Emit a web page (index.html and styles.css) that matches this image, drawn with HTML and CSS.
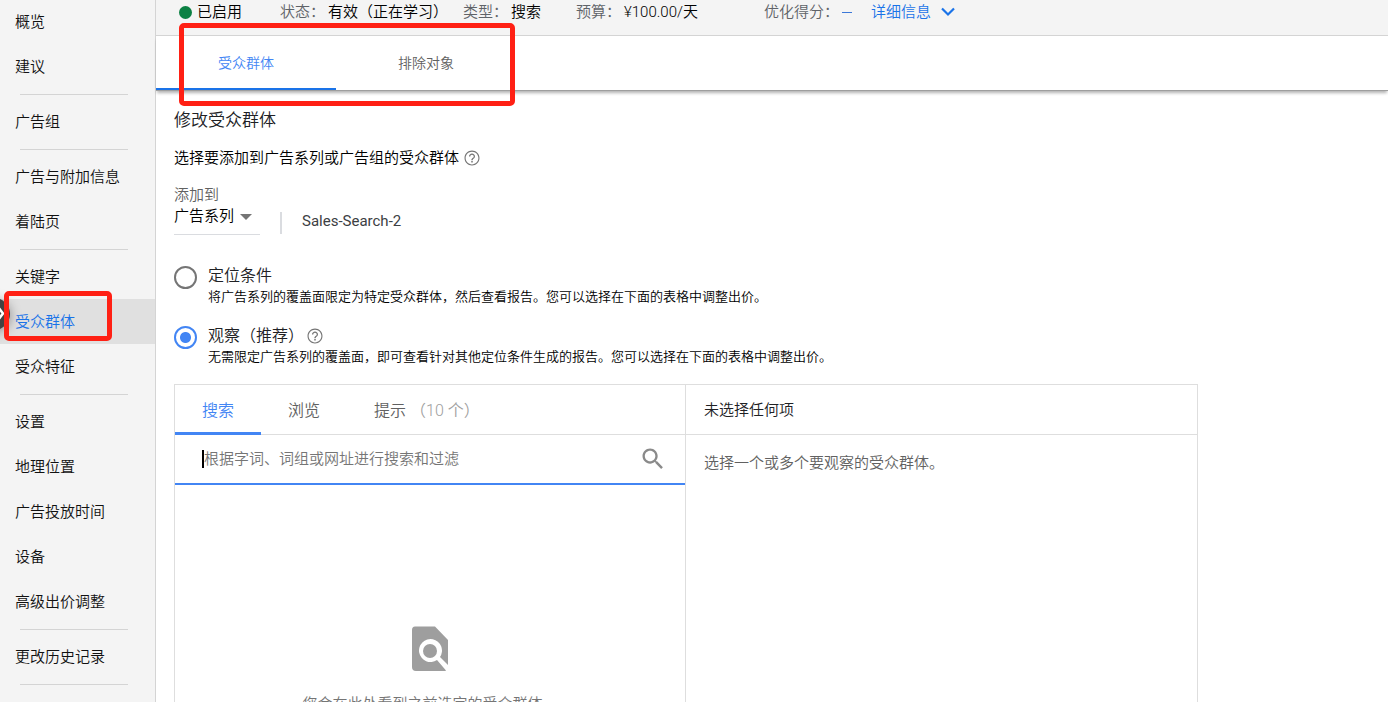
FILE: index.html
```html
<!DOCTYPE html>
<html lang="zh-CN">
<head>
<meta charset="utf-8">
<title>受众群体</title>
<link rel="stylesheet" href="styles.css">
</head>
<body>
<div class="app">
  <nav class="sidebar">
    <a href="#" class="nav-item">概览</a>
    <a href="#" class="nav-item">建议</a>
    <hr class="nav-line">
    <a href="#" class="nav-item">广告组</a>
    <hr class="nav-line">
    <a href="#" class="nav-item">广告与附加信息</a>
    <a href="#" class="nav-item">着陆页</a>
    <hr class="nav-line">
    <a href="#" class="nav-item">关键字</a>
    <a href="#" class="nav-item nav-item-active">受众群体</a>
    <a href="#" class="nav-item">受众特征</a>
    <hr class="nav-line">
    <a href="#" class="nav-item">设置</a>
    <a href="#" class="nav-item">地理位置</a>
    <a href="#" class="nav-item">广告投放时间</a>
    <a href="#" class="nav-item">设备</a>
    <a href="#" class="nav-item">高级出价调整</a>
    <hr class="nav-line">
    <a href="#" class="nav-item">更改历史记录</a>
    <hr class="nav-line">
    <button class="expander" type="button" aria-label="展开">
      <svg width="32" height="32" viewBox="0 0 32 32"><path d="M20 9l5 6.500-5 6.500" fill="none" stroke="#fff" stroke-width="2.500"/></svg>
    </button>
    <div class="mark mark-nav"></div>
  </nav>

  <div class="content">
    <header class="status-bar">
      <div class="status status-enabled"><span class="dot"></span><span>已启用</span></div>
      <div class="status status-state"><span class="key">状态：</span><span>有效（正在学习）</span></div>
      <div class="status status-type"><span class="key">类型：</span><span>搜索</span></div>
      <div class="status status-budget"><span class="key">预算：</span><span>¥100.00/天</span></div>
      <div class="status status-score"><span class="key">优化得分：</span><span class="dash"></span></div>
      <a href="#" class="details">详细信息
        <svg width="14" height="10" viewBox="0 0 14 10"><path d="M1 1.500l6 6 6-6" fill="none" stroke="#1a73e8" stroke-width="2.200"/></svg>
      </a>
    </header>

    <div class="tabs" role="tablist">
      <button class="tab tab-active" type="button" role="tab">受众群体</button>
      <button class="tab" type="button" role="tab">排除对象</button>
      <div class="mark mark-tabs"></div>
    </div>

    <main class="main">
      <h1 class="title">修改受众群体</h1>
      <p class="subtitle">选择要添加到广告系列或广告组的受众群体
        <svg class="help" viewBox="0 0 24 24"><path d="M11 18h2v-2h-2v2zm1-16C6.480 2 2 6.480 2 12s4.480 10 10 10 10-4.480 10-10S17.520 2 12 2zm0 18.500c-4.700 0-8.500-3.800-8.500-8.500S7.300 3.500 12 3.500s8.500 3.800 8.500 8.500-3.800 8.500-8.500 8.500zM12 6c-2.210 0-4 1.790-4 4h1.700c0-1.300 1.050-2.300 2.300-2.300s2.300 1 2.300 2.300c0 2-3.200 1.900-3.200 5h1.800c0-2.250 3.100-2.500 3.100-5 0-2.210-1.790-4-4-4z"/></svg>
      </p>

      <label class="field-label" for="level">添加到</label>
      <div class="target">
        <div class="select-box">
          <select id="level" class="select"><option>广告系列</option></select>
          <svg class="caret" width="12" height="6" viewBox="0 0 12 6"><path d="M0 0h12L6 6z" fill="#757575"/></svg>
        </div>
        <span class="campaign">Sales-Search-2</span>
      </div>

      <div class="option">
        <input class="radio" type="radio" name="mode" id="targeting">
        <div>
          <label class="option-name" for="targeting">定位条件</label>
          <p class="option-text">将广告系列的覆盖面限定为特定受众群体，然后查看报告。您可以选择在下面的表格中调整出价。</p>
        </div>
      </div>
      <div class="option">
        <input class="radio" type="radio" name="mode" id="observe" checked>
        <div>
          <label class="option-name" for="observe">观察（推荐）
            <svg class="help" viewBox="0 0 24 24"><path d="M11 18h2v-2h-2v2zm1-16C6.480 2 2 6.480 2 12s4.480 10 10 10 10-4.480 10-10S17.520 2 12 2zm0 18.500c-4.700 0-8.500-3.800-8.500-8.500S7.300 3.500 12 3.500s8.500 3.800 8.500 8.500-3.800 8.500-8.500 8.500zM12 6c-2.210 0-4 1.790-4 4h1.700c0-1.300 1.050-2.300 2.300-2.300s2.300 1 2.300 2.300c0 2-3.200 1.900-3.200 5h1.800c0-2.250 3.100-2.500 3.100-5 0-2.210-1.790-4-4-4z"/></svg>
          </label>
          <p class="option-text">无需限定广告系列的覆盖面，即可查看针对其他定位条件生成的报告。您可以选择在下面的表格中调整出价。</p>
        </div>
      </div>

      <section class="picker">
        <div class="pane pane-browse">
          <div class="pane-head" role="tablist">
            <button class="pane-tab pane-tab-active" type="button" role="tab">搜索</button>
            <button class="pane-tab" type="button" role="tab">浏览</button>
            <button class="pane-tab" type="button" role="tab">提示<span class="count">（10 个）</span></button>
          </div>
          <div class="search">
            <span class="cursor"></span>
            <input class="search-input" type="text" aria-label="搜索" placeholder="根据字词、词组或网址进行搜索和过滤">
            <svg width="28" height="28" viewBox="0 0 24 24"><path fill="#8a8a8a" d="M15.500 14h-.79l-.28-.27C15.410 12.590 16 11.110 16 9.500 16 5.910 13.090 3 9.500 3S3 5.910 3 9.500 5.910 16 9.500 16c1.610 0 3.090-.59 4.230-1.570l.27.28v.79l5 4.990L20.490 19l-4.990-5zm-6 0C7.010 14 5 11.990 5 9.500S7.010 5 9.500 5 14 7.010 14 9.500 11.990 14 9.500 14z"/></svg>
          </div>
          <div class="empty">
            <svg width="38" height="46" viewBox="0 0 38 46"><path d="M4 .5H24L37 14V39L29 31A11.500 11.500 0 1 0 26 34L35 44.500Q34.500 45 33 45H5Q1 45 1 41V4Q1 .5 4 .5z" fill="#9e9e9e"/><circle cx="19" cy="25" r="7" fill="#9e9e9e"/></svg>
            <p class="empty-text">您会在此处看到之前选定的受众群体。</p>
          </div>
        </div>
        <div class="pane">
          <div class="pane-head selected-head">未选择任何项</div>
          <p class="hint">选择一个或多个要观察的受众群体。</p>
        </div>
      </section>
    </main>
  </div>
</div>
</body>
</html>
```
FILE: styles.css
```css
* { box-sizing: border-box; }
body {
  margin: 0;
  font: 15px/20px Roboto, "Noto Sans CJK SC", sans-serif;
  font-weight: 350;
  color: #000;
  background: #fff;
}
h1, p { margin: 0; font-weight: inherit; }
a { text-decoration: none; }
button, input, select { font: inherit; color: inherit; }
button { border: 0; padding: 0; background: none; }
svg { flex: none; }

.app { display: flex; height: 100vh; overflow: hidden; }

.sidebar {
  position: relative;
  flex: none;
  width: 156px;
  background: #f4f4f4;
  border-right: 1px solid #d4d4d4;
}
.nav-item {
  display: flex;
  align-items: center;
  height: 45px;
  padding-left: 15px;
  color: #111;
}
.nav-item:first-child { height: 44px; }
.nav-item-active { background: #e0e0e0; color: #1a73e8; }
.nav-line {
  height: 1px;
  margin: 5px 27px 4px 20px;
  border: 0;
  background: #d4d4d4;
}
.expander {
  position: absolute;
  left: -22px;
  top: 298px;
  width: 32px;
  height: 32px;
  border-radius: 50%;
  background: #424242;
  box-shadow: 0 2px 12px rgba(0, 0, 0, .4);
}
.expander svg { display: block; }
.mark {
  position: absolute;
  border: 5px solid #ff2014;
  border-radius: 5px;
  pointer-events: none;
}
.mark-nav { left: 4px; top: 291px; width: 108px; height: 50px; }
.mark-tabs { left: 23px; top: -13px; width: 336px; height: 83px; }

.content { flex: 1; min-width: 0; }
.status-bar {
  display: flex;
  height: 36px;
  padding: 2px 0 0 23px;
  background: #f4f4f4;
  border-bottom: 1px solid #d4d4d4;
  white-space: nowrap;
}
.status { display: flex; gap: 3px; height: 20px; }
.status-enabled { width: 101px; gap: 5px; align-items: center; }
.status-state { width: 183px; }
.status-type { width: 113px; }
.status-budget { width: 188px; }
.status-score { width: 107px; align-items: center; }
.key { color: #5f6368; }
.dot { width: 13px; height: 13px; border-radius: 50%; background: #0b8043; }
.dash { width: 10px; height: 1px; background: #3c78d8; }
.details { display: flex; align-items: center; gap: 10px; height: 20px; color: #1a73e8; }

.tabs {
  position: relative;
  display: flex;
  height: 55px;
  border-bottom: 1px solid #9e9e9e;
  box-shadow: 0 3px 3px -1px rgba(0, 0, 0, .3);
}
.tab {
  width: 180px;
  height: 54px;
  border-bottom: 2px solid transparent;
  padding-top: 2px;
  font-size: 14px;
  color: #616161;
}
.tab-active { color: #4285f4; border-color: #1a73e8; }

.main { padding: 17px 18px 0; }
.title { font-size: 17px; line-height: 24px; color: #202124; }
.subtitle { display: flex; align-items: center; gap: 4px; margin-top: 16px; }
.help { width: 18px; height: 18px; fill: #757575; }
.field-label { display: block; margin-top: 17px; color: #616161; }
.target { display: flex; }
.select-box {
  position: relative;
  width: 86px;
  height: 30px;
  border-bottom: 1px solid #dadce0;
}
.select {
  appearance: none;
  display: block;
  width: 100%;
  height: 22px;
  padding: 0;
  border: 0;
  background: transparent;
}
.caret { position: absolute; right: 8px; top: 9px; }
.campaign {
  height: 22px;
  margin: 7px 0 0 20px;
  padding-left: 20px;
  border-left: 2px solid #dadce0;
  line-height: 18px;
  font-weight: 400;
  color: #3c4043;
}

.option { display: flex; gap: 11px; height: 60px; }
.target + .option { margin-top: 31px; }
.radio {
  appearance: none;
  flex: none;
  width: 23px;
  height: 23px;
  margin: 0;
  border: 2px solid #757575;
  border-radius: 50%;
}
.radio:checked {
  border-color: #4285f4;
  background: radial-gradient(circle, #4285f4 5px, transparent 6px);
}
.option-name {
  display: flex;
  align-items: center;
  gap: 2px;
  font-size: 16px;
  color: #202124;
}
.option-text { font-size: 13px; line-height: 22px; }

.picker {
  display: grid;
  grid-template-columns: 1fr 1fr;
  max-width: 1024px;
  height: 400px;
  margin-top: -2px;
  border: 1px solid #dedede;
}
.pane-browse { border-right: 1px solid #dedede; }
.pane-head { display: flex; height: 50px; border-bottom: 1px solid #dedede; }
.pane-tab {
  height: 50px;
  padding: 5px 27px 0;
  border-bottom: 3px solid transparent;
  font-size: 16px;
  color: #616161;
}
.pane-tab-active { color: #4285f4; border-color: #4285f4; }
.count { margin-left: 4px; color: #9e9e9e; }
.search {
  display: flex;
  align-items: center;
  height: 50px;
  padding: 0 18px 0 27px;
  border-bottom: 2px solid #4285f4;
}
.cursor { width: 2px; height: 18px; background: #000; }
.search-input {
  flex: 1;
  height: 30px;
  padding: 0;
  border: 0;
  outline: 0;
  background: none;
}
.search-input::placeholder { color: #757575; opacity: 1; }
.empty {
  display: flex;
  flex-direction: column;
  align-items: center;
  gap: 22px;
  padding-top: 141px;
  color: #757575;
}
.selected-head { align-items: center; padding-left: 18px; color: #202124; }
.hint { padding: 18px; color: #616161; }
```
